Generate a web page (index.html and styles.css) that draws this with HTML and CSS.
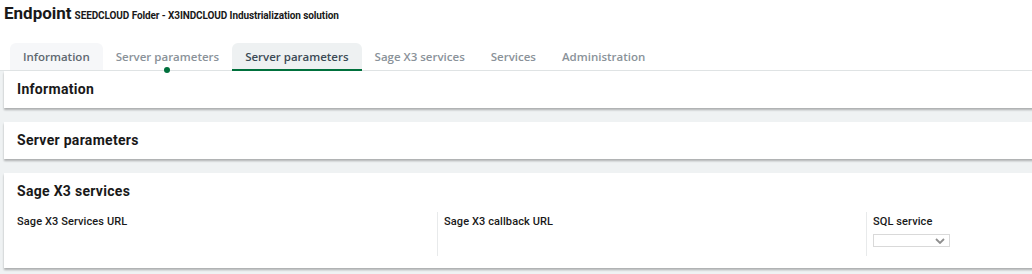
FILE: index.html
```html
<!doctype html>
<html lang="en">
  <head>
    <meta charset="UTF-8" />
    <title>Endpoint</title>
    <link rel="stylesheet" href="styles.css">
  </head>
  <body>
    <header class="page-header">
      <h1>Endpoint</h1>
      <span class="subtitle">SEEDCLOUD Folder - X3INDCLOUD Industrialization solution</span>
    </header>

    <nav class="tabs">
      <div class="tab tab-light">Information</div>
      <div class="tab tab-dot">Server parameters</div>
      <div class="tab tab-active">Server parameters</div>
      <div class="tab">Sage X3 services</div>
      <div class="tab">Services</div>
      <div class="tab">Administration</div>
    </nav>

    <main class="content">
      <section class="card">
        <h2>Information</h2>
      </section>

      <section class="card">
        <h2>Server parameters</h2>
      </section>

      <section class="card card-fields">
        <h2>Sage X3 services</h2>
        <div class="fields">
          <div class="field">
            <label>Sage X3 Services URL</label>
          </div>
          <div class="field">
            <label>Sage X3 callback URL</label>
          </div>
          <div class="field field-narrow">
            <label>SQL service</label>
            <div class="select">
              <svg width="10" height="6" viewBox="0 0 10 6"><path d="M1 1 L5 5 L9 1" fill="none" stroke="#8f8f8f" stroke-width="1.8"/></svg>
            </div>
          </div>
        </div>
      </section>
    </main>
  </body>
</html>
```

FILE: styles.css
```css
* {
  margin: 0;
  padding: 0;
  box-sizing: border-box;
}

body {
  background-color: #ffffff;
  font-family: Roboto, 'Liberation Sans', sans-serif;
  color: #191919;
  overflow: hidden;
}

.page-header {
  display: flex;
  align-items: baseline;
  gap: 3px;
  padding: 3px 4px 0;
  height: 43px;
}

h1 {
  font-size: 17px;
  font-weight: 700;
}

.subtitle {
  font-size: 10px;
  font-weight: 700;
  letter-spacing: -0.1px;
}

.tabs {
  display: flex;
  padding-left: 10px;
  border-bottom: 1px solid #dfe3e4;
  height: 28px;
}

.tab {
  position: relative;
  padding: 0 13px;
  height: 27px;
  line-height: 27px;
  font-family: 'Open Sans', sans-serif;
  font-size: 11.5px;
  font-weight: 600;
  color: #8a9299;
  border-radius: 6px 6px 0 0;
}

.tab-light {
  background-color: #f6f7f9;
  color: #5f6870;
}

.tab-active {
  background-color: #eef1f2;
  color: #3b4a55;
  border-bottom: 2px solid #00703c;
  height: 28px;
}

.tab-dot::after {
  content: '';
  position: absolute;
  left: 50%;
  bottom: -3px;
  width: 6px;
  height: 6px;
  margin-left: -3px;
  border-radius: 50%;
  background-color: #00703c;
}

.content {
  background-color: #eff2f3;
  padding: 0 0 7px 4px;
  display: flex;
  flex-direction: column;
  gap: 14px;
}

.card {
  background-color: white;
  box-shadow: 0 2px 2px rgba(0, 0, 0, 0.28);
  padding: 10px 13px;
  min-height: 37px;
  margin-right: -10px;
}

h2 {
  font-size: 14px;
  font-weight: 700;
  line-height: 17px;
  letter-spacing: 0.3px;
}

.card-fields {
  padding-top: 10px;
  padding-bottom: 12px;
}

.fields {
  display: flex;
  margin-top: 12px;
}

.field {
  flex: 0 0 429px;
  height: 44px;
  border-left: 1px solid #e8eaeb;
  padding-left: 6px;
}

.field:first-child {
  border-left: none;
  padding-left: 0;
  flex-basis: 420px;
}

.field-narrow {
  flex: 1;
}

label {
  display: block;
  font-size: 11px;
  font-weight: 500;
  letter-spacing: 0.1px;
  margin-top: 3px;
}

.select {
  width: 77px;
  height: 13px;
  margin-top: 6px;
  border: 1px solid #d9d9d9;
  display: flex;
  align-items: center;
  justify-content: flex-end;
  padding-right: 4px;
}
```
